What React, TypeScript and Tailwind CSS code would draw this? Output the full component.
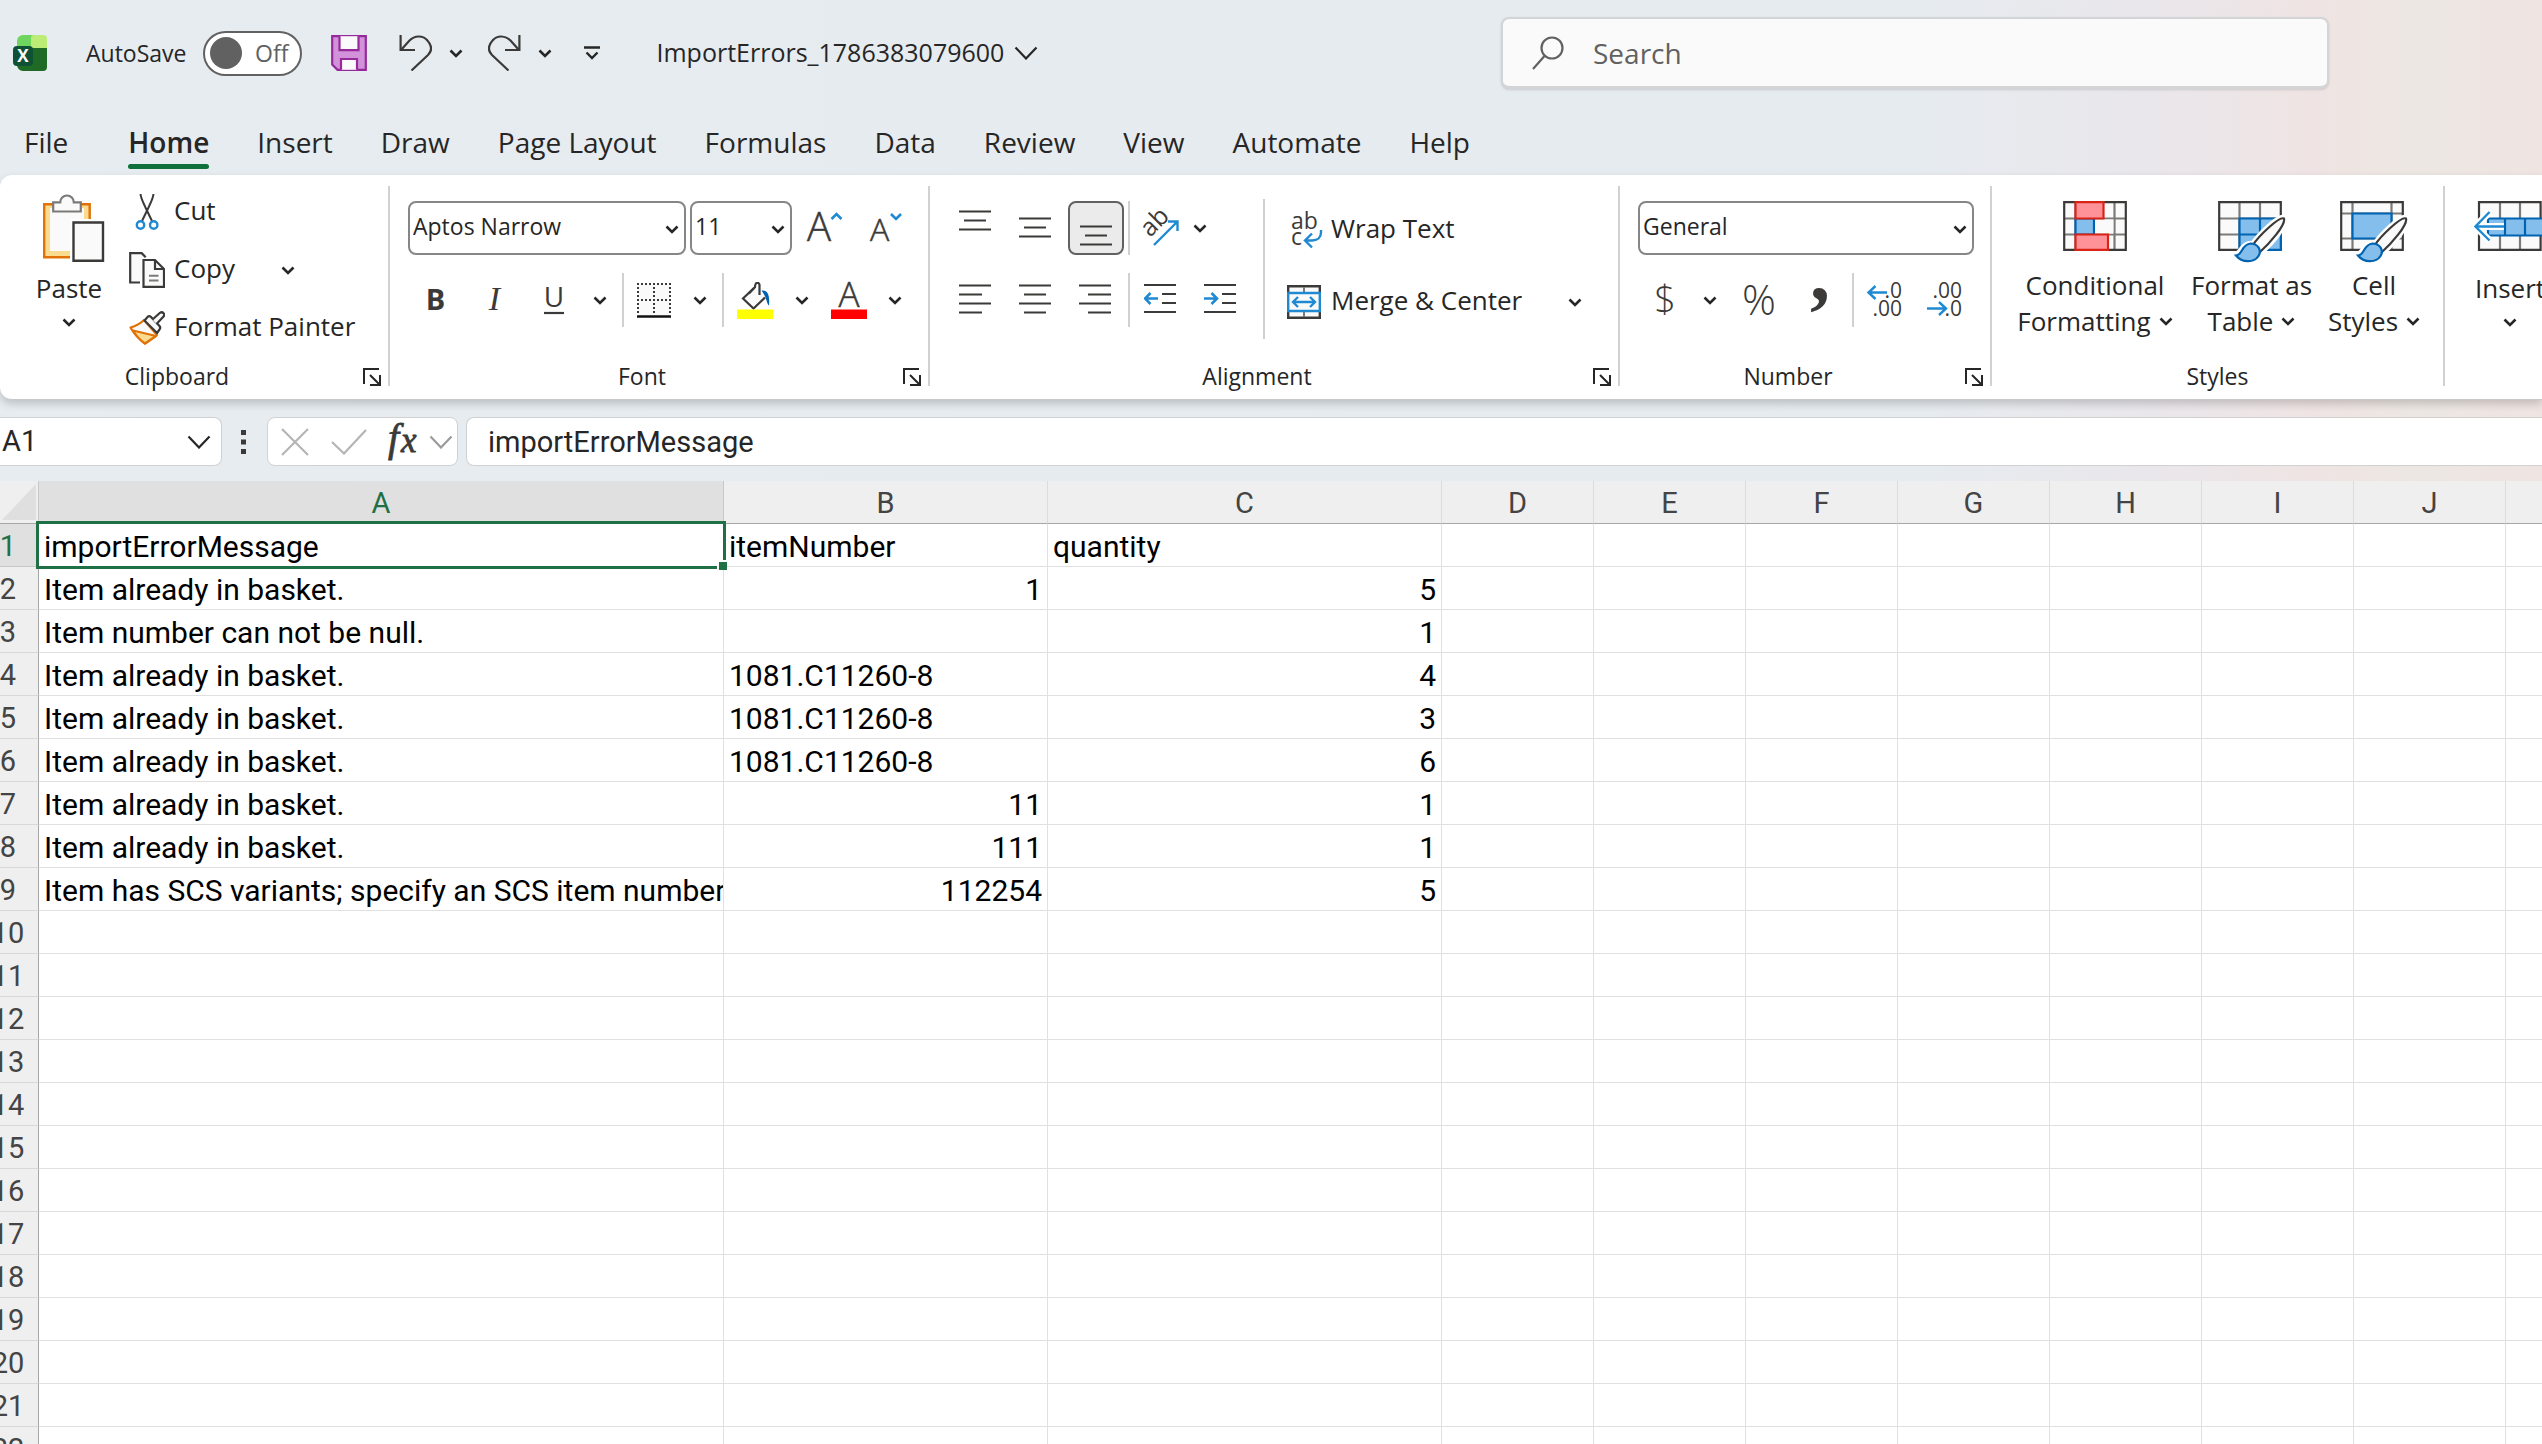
import type { ReactNode } from "react";

const tabs = ["File", "Home", "Insert", "Draw", "Page Layout", "Formulas", "Data", "Review", "View", "Automate", "Help"];

const columns = ["A", "B", "C", "D", "E", "F", "G", "H", "I", "J", "K"];

const columnWidths = [
  "w-[61px]",
  "w-[685px]",
  "w-[324px]",
  "w-[394px]",
  "w-[152px]",
  "w-[152px]",
  "w-[152px]",
  "w-[152px]",
  "w-[152px]",
  "w-[152px]",
  "w-[152px]",
  "w-[152px]",
];

type Cell = string | number;

const data: Cell[][] = [
  ["importErrorMessage", "itemNumber", "quantity"],
  ["Item already in basket.", 1, 5],
  ["Item number can not be null.", "", 1],
  ["Item already in basket.", "1081.C11260-8", 4],
  ["Item already in basket.", "1081.C11260-8", 3],
  ["Item already in basket.", "1081.C11260-8", 6],
  ["Item already in basket.", 11, 1],
  ["Item already in basket.", 111, 1],
  ["Item has SCS variants; specify an SCS item number to", 112254, 5],
];

const rowNumbers = Array.from({ length: 22 }, (_, index) => index + 1);

const INK = "#3b3a39";
const BLUE = "#1f8ad2";
const DEEP_BLUE = "#0063b1";

function Chevron({ className = "" }: { className?: string }) {
  return (
    <svg aria-hidden width="14" height="9" viewBox="0 0 14 9" fill="none" stroke="#262626" strokeWidth="2.6" className={`shrink-0 ${className}`}>
      <path d="M1.5 1.5 7 7l5.5-5.5" />
    </svg>
  );
}

function WideChevron({ color = "#262626" }: { color?: string }) {
  return (
    <svg aria-hidden width="24" height="14" viewBox="0 0 24 14" fill="none" stroke={color} strokeWidth="2.2" className="shrink-0">
      <path d="m1.5 1.5 10.5 11 10.5-11" />
    </svg>
  );
}

function ExcelLogo() {
  return (
    <svg aria-hidden width="35" height="36" viewBox="0 0 35 36" className="shrink-0">
      <path d="M4 12h30v20a4 4 0 0 1-4 4H10a6 6 0 0 1-6-6z" fill="#1f6a25" />
      <path d="M4 12V6a6 6 0 0 1 6-6h11v13H4z" fill="#6fd55f" />
      <path d="M18 3a3 3 0 0 1 3-3h9a4 4 0 0 1 4 4v9H21a3 3 0 0 1-3-3z" fill="#bdec76" />
      <rect x="0" y="11" width="20" height="20" rx="4" fill="#0f5135" />
      <text x="10" y="27" textAnchor="middle" fontSize="17" fontWeight="700" fill="#fff" className="font-['Open_Sans',sans-serif]">X</text>
    </svg>
  );
}

function SaveIcon() {
  return (
    <svg aria-hidden width="36" height="36" viewBox="0 0 36 36" fill="#d192da" stroke="#962a9c" strokeWidth="2.2">
      <path d="M1.2 1.2h33.6v33.6H6.5l-5.3-5.3z" />
      <path d="M8.5 1.2v14h19v-14" fill="#fafafa" />
      <path d="M10 34.8V24h16v10.8" fill="#fafafa" />
    </svg>
  );
}

function UndoIcon() {
  return (
    <svg aria-hidden width="33" height="36" viewBox="0 0 33 36" fill="none" stroke={INK} strokeWidth="2.2">
      <path d="M1.6 0v15H16" />
      <path d="M2 15 10.5 5.5C15.5.5 23.5 0 28 5s5.5 10.500 1 15L12.5 35.5" />
    </svg>
  );
}

function RedoIcon() {
  return (
    <svg aria-hidden width="33" height="36" viewBox="0 0 33 36" fill="none" stroke={INK} strokeWidth="2.2">
      <path d="M31.4 0v15H17" />
      <path d="M31 15 22.5 5.5C17.5.5 9.5 0 5 5S-.5 15.5 4 20l16.500 15.500" />
    </svg>
  );
}

// Drawn a little right of centre, the front page hangs past the label
function PasteIcon() {
  return (
    <svg aria-hidden width="72" height="68" viewBox="-10 0 72 68">
      <path d="M1.2 10.200h45.500v53H1.200z" fill="#f9dc8f" stroke="#e07207" strokeWidth="2.4" />
      <path d="M7 14h34v43H7z" fill="#fafafa" />
      <path d="M10.2 17.500V8.300h7a6.800 6.800 0 0 1 13.600 0h7v9.200z" fill="#fafafa" stroke="#7a7a78" strokeWidth="2.2" />
      <path d="M27 25h35v43H27z" fill="#fff" />
      <path d="M30.5 28.500h29.500v38.300H30.500z" fill="#fafafa" stroke={INK} strokeWidth="2.4" />
    </svg>
  );
}

function CutIcon() {
  return (
    <svg aria-hidden width="36" height="36" viewBox="0 0 36 36" fill="none">
      <path d="M11.5 0c.5 5 3.500 10 5 13.500L23 27M24.500 0c-.5 5-3.500 10-5 13.500L13 27" stroke={INK} strokeWidth="2" />
      <circle cx="11.5" cy="31" r="3.7" stroke={BLUE} strokeWidth="2.4" />
      <circle cx="24.7" cy="31" r="3.7" stroke={BLUE} strokeWidth="2.4" />
    </svg>
  );
}

function CopyIcon() {
  return (
    <svg aria-hidden width="36" height="36" viewBox="0 0 36 36" fill="#fafafa" stroke={INK} strokeWidth="2.2">
      <path d="M11 30.500H1.200V1.200h11.500l4 4" />
      <path d="M14.500 8h11.500l9 9v17.800H14.500z" />
      <path d="M26 8v9h9" fill="none" />
      <path d="M20 23.700h9.500M20 28.500h9.500" stroke="#7a7a78" strokeWidth="2" />
    </svg>
  );
}

function PainterIcon() {
  return (
    <svg aria-hidden width="36" height="34" viewBox="0 0 36 34" strokeWidth="2.2" strokeLinejoin="round">
      <path d="M1.500 16.500C7 15 11 13 15 9l13 15-12 8.500C10 28 5 23 1.500 16.500z" fill="#fafafa" stroke="#e07207" />
      <path d="M4 19.500 27 25l-11 7.500C11 29 7 25 4 19.500z" fill="#f9dc8f" stroke="#e07207" />
      <path d="m15.500 9.500 3.500-4q1.500-1 3 .5l8.500 9q1.500 2 0 3.500L28 22z" fill="#fafafa" stroke={INK} />
      <path d="m23.500 8.500 7.500-6.700q2-1.300 3.500.4 1.500 2-.2 3.600L27.500 13" fill="#fafafa" stroke={INK} />
    </svg>
  );
}

function LauncherIcon() {
  return (
    <svg aria-hidden width="18" height="18" viewBox="0 0 18 18" fill="none" stroke="#262626" strokeWidth="2">
      <path d="M1 16V1h15M7 7l9.500 9.500M17 7v10H7" />
    </svg>
  );
}

function GrowFontIcon({ shrink = false }: { shrink?: boolean }) {
  return (
    <svg aria-hidden width="36" height="44" viewBox="0 -4 36 44" className="overflow-visible">
      <text x="0" y="31" fontSize={shrink ? 32 : 40} fontWeight="300" fill={INK} stroke={INK} strokeWidth=".5" className="font-['Open_Sans',sans-serif]">A</text>
      <path d={shrink ? "m21 4 5 5 5-5" : "m24.500 9 5-5 5 5"} fill="none" stroke={BLUE} strokeWidth="2.6" />
    </svg>
  );
}

function UnderlineIcon() {
  return (
    <svg aria-hidden width="22" height="40" viewBox="0 -2 22 40" className="overflow-visible">
      <text x="11" y="25" textAnchor="middle" fontSize="28" fill={INK} className="font-['Open_Sans',sans-serif]">U</text>
      <path d="M1 31h20" stroke={INK} strokeWidth="2.2" />
    </svg>
  );
}

function BordersIcon() {
  return (
    <svg aria-hidden width="34" height="36" viewBox="0 0 34 36" fill="none">
      <path d="M1 2h32v32H1z" fill="#fafafa" />
      <path d="M0 2h34M0 18h34" stroke={INK} strokeWidth="2" strokeDasharray="2 2" />
      <path d="M1 1v31M17 1v31M33 1v31" stroke={INK} strokeWidth="2" strokeDasharray="2 2" />
      <path d="M0 34.500h34" stroke="#111" strokeWidth="2.6" />
    </svg>
  );
}

function FillIcon() {
  return (
    <svg aria-hidden width="36" height="37" viewBox="0 0 36 37" fill="none">
      <path d="M17 6 6 16.500l10.500 10L28 15.500" fill="#fafafa" stroke={INK} strokeWidth="2.2" />
      <path d="M12 11.500 18 5c0-6 5-5 4.500-1V13" stroke={INK} strokeWidth="2.2" />
      <path d="M24.500 8.500c6-1 8.500 4 7.500 15-2.500-2-2-8-7.500-15z" fill={DEEP_BLUE} />
      <path d="M0 27.500h36V37H0z" fill="#ff0" />
    </svg>
  );
}

function FontColorIcon() {
  return (
    <svg aria-hidden width="36" height="37" viewBox="0 0 36 37" className="overflow-visible">
      <text x="18" y="25" textAnchor="middle" fontSize="35" fontWeight="300" fill={INK} stroke={INK} strokeWidth=".5" className="font-['Open_Sans',sans-serif]">A</text>
      <path d="M0 27.500h36V37H0z" fill="#f00" />
    </svg>
  );
}

function LinesIcon({ d }: { d: string }) {
  return (
    <svg aria-hidden width="32" height="36" viewBox="0 0 32 36" fill="none" stroke={INK} strokeWidth="2.2">
      <path d={d} />
    </svg>
  );
}

function IndentIcon({ outdent = false }: { outdent?: boolean }) {
  return (
    <svg aria-hidden width="32" height="36" viewBox="0 0 32 36" fill="none" strokeWidth="2.2">
      <path d="M0 3h32M18 12h14M18 21h14M0 30h32" stroke={INK} />
      <path d={outdent ? "M14 16.500H1.500M6.500 11l-5.500 5.500 5.500 5.500" : "M0 16.500h12.500M7.500 11l5.500 5.500L7.500 22"} stroke={BLUE} strokeWidth="2.6" />
    </svg>
  );
}

function OrientationIcon() {
  return (
    <svg aria-hidden width="36" height="36" viewBox="0 0 36 36" fill="none" className="overflow-visible">
      <text transform="translate(8 28) rotate(-45)" fontSize="25" fill={INK} className="font-['Open_Sans',sans-serif]">ab</text>
      <path d="M12 35 35 12M26 11.500h9.500V21" stroke={BLUE} strokeWidth="2.4" />
    </svg>
  );
}

function WrapIcon() {
  return (
    <svg aria-hidden width="34" height="36" viewBox="0 0 34 36" fill="none" className="overflow-visible">
      <text x="4" y="17" fontSize="23" fill={INK} className="font-['Open_Sans',sans-serif]">ab</text>
      <text x="4" y="33" fontSize="23" fill={INK} className="font-['Open_Sans',sans-serif]">c</text>
      <path d="M34 18v2.500c0 5-3.500 8-9 8h-6.500M25 21.500l-7 7 7 7" stroke={BLUE} strokeWidth="2.4" />
    </svg>
  );
}

function MergeIcon() {
  return (
    <svg aria-hidden width="34" height="34" viewBox="0 0 34 34" fill="none">
      <path d="M1.200 1.200h31.600v31.600H1.200z" fill="#fafafa" stroke={INK} strokeWidth="2.4" />
      <path d="M17 2v6M17 26v6" stroke="#7a7a78" strokeWidth="2" />
      <path d="M1.200 8h31.600v18H1.200z" fill="#fafafa" stroke={BLUE} strokeWidth="2.4" />
      <path d="M6 17h22M11 12l-5 5 5 5M23 12l5 5-5 5" stroke={BLUE} strokeWidth="2.4" />
    </svg>
  );
}

function DecimalIcon({ decrease = false }: { decrease?: boolean }) {
  return (
    <svg aria-hidden width="35" height="36" viewBox="0 0 35 36" fill="none" className="overflow-visible">
      <g fill={INK} fontSize="21" textAnchor="end" className="font-['Open_Sans',sans-serif]">
        <text x="35" y="16">{decrease ? ".00" : ".0"}</text>
        <text x="35" y="34">{decrease ? ".0" : ".00"}</text>
      </g>
      <path d={decrease ? "M0 26.500h19M12 20l7 6.500-7 6.500" : "M20 10.500H1.500M8.500 4l-7 6.500 7 6.500"} stroke={BLUE} strokeWidth="2.4" />
    </svg>
  );
}

function ConditionalIcon() {
  return (
    <svg aria-hidden width="64" height="61" viewBox="0 0 64 61" fill="none" strokeWidth="2.2">
      <path d="M1.200 1.200h61.600v47.600H1.200z" fill="#fafafa" />
      <path d="M12.500 1v48M51.500 1v48M1 17.500h62M1 33.500h62" stroke="#7a7a78" />
      <path d="M1.200 1.200h61.600v47.600H1.200z" stroke={INK} />
      <path d="M12.500 17.500h18.500v16H12.500z" fill="#83beec" stroke={DEEP_BLUE} />
      <path d="M32.200 18.600h18.200v13.800h-18.200z" fill="#fafafa" />
      <path d="M12.500 1.200h28v16.300h-28zM12.500 33.500h32.500v15.300H12.500z" fill="#ff9298" stroke="#d92316" />
    </svg>
  );
}

function Brush() {
  return (
    <g strokeWidth="2.2">
      <path d="M66 17.500C61 15 41 35 35.500 43.500 24 42 24 54 17 54.500c6 8.500 19 8 24 .5l2-5c9-7 25-26 23-32.500z" fill="#fff" stroke="#fff" strokeWidth="7" />
      <path d="M66 17.500C61 15 40 36 35 44l7 7c9-8 26-27 24-33.500z" fill="#fafafa" stroke={INK} />
      <path d="M18 54.500C25 54 23 43.500 32.500 42.500 40 42.500 44 49.500 40.500 55c-4.500 7-16.500 7-22.500-.5z" fill="#83beec" stroke={DEEP_BLUE} />
    </g>
  );
}

function FormatTableIcon() {
  return (
    <svg aria-hidden width="68" height="62" viewBox="0 0 68 62" fill="none" strokeWidth="2.2">
      <path d="M1.200 1.200h61.600v47.600H1.200z" fill="#fafafa" />
      <path d="M21.500 1v48M42 1v48M1 17.500h62M1 33.500h62" stroke="#7a7a78" />
      <path d="M1.200 1.200h61.600v47.600H1.200z" stroke={INK} />
      <path d="M21.500 17.500h41.300v31.300H21.500z" fill="#83beec" stroke={DEEP_BLUE} />
      <path d="M42 17.500v31M21.500 33.500h41" stroke={DEEP_BLUE} />
      <Brush />
    </svg>
  );
}

function CellStylesIcon() {
  return (
    <svg aria-hidden width="68" height="62" viewBox="0 0 68 62" fill="none" strokeWidth="2.2">
      <path d="M1.200 1.200h61.600v47.600H1.200z" fill="#fafafa" />
      <path d="M12.500 1v48M51.500 1v48M1 12.500h62M1 37.500h62" stroke="#7a7a78" />
      <path d="M1.200 1.200h61.600v47.600H1.200z" stroke={INK} />
      <path d="M12.500 12.500h39v25h-39z" fill="#83beec" stroke={DEEP_BLUE} />
      <Brush />
    </svg>
  );
}

function InsertCellsIcon() {
  return (
    <svg aria-hidden width="72" height="68" viewBox="0 0 72 68" fill="none" strokeWidth="2.2">
      <path d="M5 8.200h61.600v47.600H5z" fill="#fafafa" />
      <path d="M26 8v48M46 8v48" stroke="#7a7a78" />
      <path d="M5 8.200h61.600v47.600H5z" stroke={INK} />
      <path d="M14 24.500h58v17H14z" fill="#83beec" stroke={DEEP_BLUE} />
      <path d="M31 24v18M51 24v18" stroke={DEEP_BLUE} />
      <path d="M30 32.500H1M15.500 18 1.500 32.500l14 14" stroke="#fff" strokeWidth="7" />
      <path d="M30 32.500H1M15.500 18 1.500 32.500l14 14" stroke={BLUE} strokeWidth="2.4" />
    </svg>
  );
}

function IconButton({ label, className = "w-[60px]", children }: { label: string; className?: string; children: ReactNode }) {
  return (
    <button type="button" aria-label={label} className={`flex h-[54px] shrink-0 items-center justify-center ${className}`}>
      {children}
    </button>
  );
}

function Separator({ className = "h-[54px]" }: { className?: string }) {
  return <span className={`w-[2px] shrink-0 bg-[#d1d1d1] ${className}`} />;
}

function Combo({ label, value, className }: { label: string; value: string; className: string }) {
  return (
    <div className={`relative ${className}`}>
      <select aria-label={label} defaultValue={value} className="h-[54px] w-full appearance-none rounded-lg border-2 border-[#868686] bg-white pb-1 pl-[3px] text-[23px] text-[#262626]">
        <option>{value}</option>
      </select>
      <Chevron className="pointer-events-none absolute top-6 right-[7px]" />
    </div>
  );
}

function RibbonGroup({ title, className, launcher = true, children }: { title: string; className: string; launcher?: boolean; children: ReactNode }) {
  return (
    <section aria-label={title} className={`flex shrink-0 ${className}`}>
      <div className="flex flex-1 flex-col pt-2">
        <div className="h-[174px]">{children}</div>
        <div className="flex h-10 items-center">
          <span className="flex-1 pb-[2px] text-center text-[23px]">{title}</span>
          {launcher ? (
            <button type="button" aria-label={`${title} settings`} className="mr-[7px] ml-[9px]">
              <LauncherIcon />
            </button>
          ) : null}
        </div>
      </div>
      <Separator className="mt-[11px] h-[200px]" />
    </section>
  );
}

function TextButton({ icon, children }: { icon: ReactNode; children: ReactNode }) {
  return (
    <button type="button" className="flex h-[58px] items-center gap-[9px] text-[26px] whitespace-nowrap">
      <span className="flex w-9 justify-center">{icon}</span>
      <span className="pb-[3px]">{children}</span>
    </button>
  );
}

function StyleButton({ icon, first, second, className }: { icon: ReactNode; first: string; second: string; className: string }) {
  return (
    <button type="button" className={`flex flex-col items-center pt-[18px] text-[26px] leading-9 whitespace-nowrap ${className}`}>
      <span className="h-[66px]">{icon}</span>
      <span>{first}</span>
      <span className="flex items-center gap-2">
        {second}
        <Chevron />
      </span>
    </button>
  );
}

function TitleBar() {
  return (
    <header className="flex h-[106px] items-center pl-[13px] text-[23px]">
      <ExcelLogo />
      <label className="ml-[38px] flex items-center gap-[17px]">
        AutoSave
        <input type="checkbox" role="switch" className="sr-only" />
        <span className="flex h-[45px] w-[99px] items-center justify-between rounded-full border-2 border-[#616161] bg-white pr-3 pl-[5px] text-[#616161]">
          <span className="size-8 rounded-full bg-[#616161]" />
          Off
        </span>
      </label>
      <button type="button" aria-label="Save" className="ml-[29px]"><SaveIcon /></button>
      <button type="button" aria-label="Undo" className="ml-8"><UndoIcon /></button>
      <button type="button" aria-label="Undo options" className="ml-[17px]"><Chevron /></button>
      <button type="button" aria-label="Redo" className="ml-[25px]"><RedoIcon /></button>
      <button type="button" aria-label="Redo options" className="ml-[17px]"><Chevron /></button>
      <button type="button" aria-label="Customize toolbar" className="ml-8">
        <svg aria-hidden width="16" height="14" viewBox="0 0 16 14" fill="none" stroke="#262626" strokeWidth="2.4">
          <path d="M0 1.500h16M2.500 6.500 8 12l5.500-5.500" />
        </svg>
      </button>
      <button type="button" className="ml-14 flex items-center gap-[10px] text-[25px]">
        ImportErrors_1786383079600
        <WideChevron />
      </button>
      <label className="mr-[213px] ml-auto flex h-[72px] w-[828px] items-center gap-[29px] rounded-lg border-2 border-b-[3px] border-[#d3d4d6] bg-[#fafafa] pl-[29px] shadow-sm">
        <svg aria-hidden width="32" height="34" viewBox="0 0 32 34" fill="none" stroke="#616161" strokeWidth="2.2" className="shrink-0">
          <circle cx="20" cy="12" r="10.500" />
          <path d="M12.500 20 1 33" />
        </svg>
        <input type="search" aria-label="Search" placeholder="Search" className="flex-1 bg-transparent text-[28px] outline-none placeholder:text-[#616161]" />
      </label>
    </header>
  );
}

function TabRow() {
  return (
    <nav aria-label="Ribbon tabs" className="flex h-[69px] items-stretch gap-12 pl-6 text-[28px]">
      {tabs.map((tab) => (
        <button
          key={tab}
          type="button"
          className={tab === "Home" ? "relative pt-[2px] font-semibold" : tab === "File" ? "mr-3 pt-[2px]" : "pt-[2px] whitespace-nowrap"}
        >
          {tab}
          {tab === "Home" ? <span className="absolute inset-x-0 bottom-[6px] h-[5px] rounded-full bg-[#0f703b]" /> : null}
        </button>
      ))}
    </nav>
  );
}

function Ribbon() {
  return (
    <div className="relative flex h-[225px] overflow-hidden rounded-l-xl border-b border-[#c6c8cc] bg-white shadow-[0_4px_8px_rgba(0,0,0,0.18)]">
      <RibbonGroup title="Clipboard" className="w-[390px]">
        <div className="flex">
          <button type="button" className="flex w-[129px] flex-col items-center pt-[11px] pl-[9px] text-[26px]">
            <PasteIcon />
            <span className="mt-2 leading-9">Paste</span>
            <Chevron className="mt-3" />
          </button>
          <div className="flex flex-col items-start">
            <TextButton icon={<CutIcon />}>Cut</TextButton>
            <div className="flex items-center">
              <TextButton icon={<CopyIcon />}>Copy</TextButton>
              <button type="button" aria-label="Copy options" className="ml-[46px]"><Chevron /></button>
            </div>
            <TextButton icon={<PainterIcon />}>Format Painter</TextButton>
          </div>
        </div>
      </RibbonGroup>

      <RibbonGroup title="Font" className="w-[540px]">
        <div className="flex flex-col gap-[18px] pt-[18px]">
          <div className="flex pl-[18px]">
            <Combo label="Font family" value="Aptos Narrow" className="w-[278px]" />
            <Combo label="Font size" value="11" className="ml-1 w-[102px]" />
            <IconButton label="Increase font size" className="w-[66px]"><GrowFontIcon /></IconButton>
            <IconButton label="Decrease font size"><GrowFontIcon shrink /></IconButton>
          </div>
          <div className="flex pl-4">
            <IconButton label="Bold" className="w-[59px] pb-[3px] text-[29px] font-bold text-[#3b3a39]">B</IconButton>
            <IconButton label="Italic" className="w-[59px] pb-[3px] font-['Liberation_Serif',serif] text-[34px] text-[#3b3a39] italic">I</IconButton>
            <IconButton label="Underline" className="w-[59px]"><UnderlineIcon /></IconButton>
            <IconButton label="Underline options" className="mr-[5px] w-[34px]"><Chevron /></IconButton>
            <Separator />
            <IconButton label="Borders"><BordersIcon /></IconButton>
            <IconButton label="Border options" className="mr-[6px] w-8"><Chevron /></IconButton>
            <Separator />
            <IconButton label="Fill color" className="w-[62px]"><FillIcon /></IconButton>
            <IconButton label="Fill color options" className="w-8"><Chevron /></IconButton>
            <IconButton label="Font color" className="w-[62px]"><FontColorIcon /></IconButton>
            <IconButton label="Font color options" className="w-[30px]"><Chevron /></IconButton>
          </div>
        </div>
      </RibbonGroup>

      <RibbonGroup title="Alignment" className="w-[690px]">
        <div className="flex">
          <div className="flex w-[333px] flex-col gap-[18px] pt-[18px] pl-[15px]">
            <div className="flex">
              <IconButton label="Top align"><LinesIcon d="M0 1.500h32M5 10.500h22M0 19.500h32" /></IconButton>
              <IconButton label="Middle align"><LinesIcon d="M0 8.500h32M5 17.500h22M0 26.500h32" /></IconButton>
              <IconButton label="Bottom align" className="mr-1 ml-[3px] w-14 rounded-lg border-2 border-[#616161] bg-[#ebebeb]"><LinesIcon d="M0 16.500h32M5 25.500h22M0 34.500h32" /></IconButton>
              <Separator />
              <IconButton label="Orientation"><OrientationIcon /></IconButton>
              <IconButton label="Orientation options" className="w-5"><Chevron /></IconButton>
            </div>
            <div className="flex">
              <IconButton label="Align left"><LinesIcon d="M0 3.500h32M0 12.500h23M0 21.500h32M0 30.500h23" /></IconButton>
              <IconButton label="Center"><LinesIcon d="M0 3.500h32M5 12.500h22M0 21.500h32M5 30.500h22" /></IconButton>
              <IconButton label="Align right" className="mr-[3px] w-[60px]"><LinesIcon d="M0 3.500h32M9 12.500h23M0 21.500h32M9 30.500h23" /></IconButton>
              <Separator />
              <IconButton label="Decrease indent"><IndentIcon outdent /></IconButton>
              <IconButton label="Increase indent"><IndentIcon /></IconButton>
            </div>
          </div>
          <Separator className="mt-4 h-[140px]" />
          <div className="flex flex-1 flex-col gap-[14px] pt-[18px] pl-[21px]">
            <TextButton icon={<WrapIcon />}>Wrap Text</TextButton>
            <div className="flex items-center justify-between pr-9">
              <TextButton icon={<MergeIcon />}>Merge &amp; Center</TextButton>
              <button type="button" aria-label="Merge options"><Chevron /></button>
            </div>
          </div>
        </div>
      </RibbonGroup>

      <RibbonGroup title="Number" className="w-[372px]">
        <div className="flex flex-col gap-[18px] pt-[18px] pl-[18px]">
          <Combo label="Number format" value="General" className="w-[336px]" />
          <div className="flex">
            <IconButton label="Currency" className="w-[54px] pb-[3px] text-[38px] font-light text-[#3b3a39]">$</IconButton>
            <IconButton label="Currency options" className="w-9"><Chevron /></IconButton>
            <IconButton label="Percent style" className="w-[62px] pb-[3px] text-[42px] font-light text-[#3b3a39]">%</IconButton>
            <IconButton label="Comma style" className="mr-[2px] w-[60px]">
              <svg aria-hidden width="20" height="36" viewBox="0 0 20 36" className="overflow-visible">
                <text x="10" y="18" textAnchor="middle" fontSize="80" fontWeight="700" fill={INK} className="font-['Liberation_Serif',serif]">,</text>
              </svg>
            </IconButton>
            <Separator />
            <IconButton label="Increase decimal"><DecimalIcon /></IconButton>
            <IconButton label="Decrease decimal"><DecimalIcon decrease /></IconButton>
          </div>
        </div>
      </RibbonGroup>

      <RibbonGroup title="Styles" className="w-[453px]" launcher={false}>
        <div className="flex pl-[23px]">
          <StyleButton icon={<ConditionalIcon />} first="Conditional" second="Formatting" className="w-[160px]" />
          <StyleButton icon={<FormatTableIcon />} first="Format as" second="Table" className="w-[153px]" />
          <StyleButton icon={<CellStylesIcon />} first="Cell" second="Styles" className="w-[92px]" />
        </div>
      </RibbonGroup>

      <section aria-label="Cells" className="flex shrink-0 pt-2 pl-[29px]">
        <button type="button" className="flex flex-col items-center pt-[11px] text-[26px]">
          <InsertCellsIcon />
          <span className="mt-2 leading-9">Insert</span>
          <Chevron className="mt-3" />
        </button>
      </section>
    </div>
  );
}

function FormulaBar() {
  return (
    <div className="flex h-[81px] items-center pt-[2px] font-[Roboto,sans-serif] text-[29px] text-[#262626]">
      <div className="flex h-[49px] w-[222px] shrink-0 items-center rounded-r-lg border border-l-0 border-[#d1d1d1] bg-white pr-[10px] pl-[2px]">
        <input aria-label="Name box" defaultValue="A1" className="min-w-0 flex-1 bg-transparent outline-none" />
        <button type="button" aria-label="Name box list"><WideChevron /></button>
      </div>
      <svg aria-hidden width="6" height="24" viewBox="0 0 6 24" className="mr-[21px] ml-[18px] shrink-0" fill={INK}>
        <path d="M1 0h5v5H1zM1 9.500h5v5H1zM1 19h5v5H1z" />
      </svg>
      <div className="flex h-[49px] w-[191px] shrink-0 items-center rounded-lg border border-[#d1d1d1] bg-white pl-[13px]">
        <button type="button" aria-label="Cancel">
          <svg aria-hidden width="28" height="28" viewBox="0 0 28 28" fill="none" stroke="#b5b5b5" strokeWidth="2.2">
            <path d="m1 1 26 26M27 1 1 27" />
          </svg>
        </button>
        <button type="button" aria-label="Enter" className="ml-[22px]">
          <svg aria-hidden width="36" height="26" viewBox="0 0 36 26" fill="none" stroke="#b5b5b5" strokeWidth="2.2">
            <path d="m1 13 12 11.500L35 1" />
          </svg>
        </button>
        <button type="button" aria-label="Insert function" className="ml-4">
          <svg aria-hidden width="34" height="38" viewBox="0 0 34 38" fill={INK} className="overflow-visible font-['Liberation_Serif',serif] italic">
            <text x="5" y="28" fontSize="40" stroke={INK} strokeWidth=".8">f</text>
            <text x="18" y="29" fontSize="35" stroke={INK} strokeWidth=".8">x</text>
          </svg>
        </button>
        <button type="button" aria-label="Function list" className="ml-3"><WideChevron color="#9b9b9b" /></button>
      </div>
      <input aria-label="Formula bar" defaultValue="importErrorMessage" className="ml-2 h-[49px] min-w-0 flex-1 rounded-l-lg border border-r-0 border-[#d1d1d1] bg-white pl-[21px] outline-none" />
    </div>
  );
}

function Sheet() {
  return (
    <div className="h-[963px] overflow-hidden bg-white">
      <table className="-ml-[22px] w-[2680px] table-fixed border-separate border-spacing-0 font-[Roboto,sans-serif] leading-[39px] text-black">
        <colgroup>
          {columnWidths.map((width, index) => <col key={index} className={width} />)}
        </colgroup>
        <thead>
          <tr className="h-[43px] bg-[#efefef] text-[29px] text-[#444]">
            <td className="border-r border-b border-r-[#c8c8c8] border-b-[#a6a6a6] p-0">
              <svg aria-hidden width="36" height="36" viewBox="0 0 36 36" className="ml-auto">
                <path d="M34 0v36H0z" fill="#dfdfdf" />
              </svg>
            </td>
            {columns.map((column) => (
              <th
                key={column}
                scope="col"
                className={
                  column === "A"
                    ? "border-r border-b border-r-[#c8c8c8] border-b-[#a6a6a6] bg-[#e0e0e0] p-0 pt-[3px] font-normal text-[#1f7145]"
                    : "border-r border-b border-r-[#dcdcdc] border-b-[#a6a6a6] p-0 pt-[3px] font-normal"
                }
              >
                {column}
              </th>
            ))}
          </tr>
        </thead>
        <tbody>
          {rowNumbers.map((row) => (
            <tr key={row} className="h-[43px] text-[30px]">
              <th
                scope="row"
                className={
                  row === 1
                    ? "border-r border-b border-r-[#a6a6a6] border-b-[#c8c8c8] bg-[#e0e0e0] p-0 pt-[3px] text-[29px] font-normal text-[#1f7145]"
                    : "border-r border-b border-r-[#a6a6a6] border-b-[#d8d8d8] bg-[#efefef] p-0 pt-[3px] text-[29px] font-normal text-[#444]"
                }
              >
                {row}
              </th>
              {columns.map((column, index) => {
                const value = data[row - 1]?.[index] ?? "";
                const active = row === 1 && index === 0;
                return (
                  <td
                    key={column}
                    className={`border-r border-b border-[#e0e0e0] px-[5px] pt-[3px] pb-0 whitespace-nowrap ${active ? "relative" : "overflow-hidden"} ${typeof value === "number" ? "text-right" : ""}`}
                  >
                    {value}
                    {active ? (
                      <span className="absolute -inset-[3px] border-[3px] border-[#1f7145]">
                        <span className="absolute -right-1 -bottom-1 size-[10px] border-t-2 border-l-2 border-white bg-[#1f7145]" />
                      </span>
                    ) : null}
                  </td>
                );
              })}
            </tr>
          ))}
        </tbody>
      </table>
    </div>
  );
}

export default function App() {
  return (
    <div className="overflow-hidden bg-[linear-gradient(to_right,#e6ecf0_0%,#e6ebef_76%,#e9e7ec_84%,#efe4e3_91%,#ece7e2_95%,#efe4e2_100%)] font-['Open_Sans','Noto_Sans',sans-serif] text-[#262626]">
      <TitleBar />
      <TabRow />
      <Ribbon />
      <FormulaBar />
      <Sheet />
    </div>
  );
}
